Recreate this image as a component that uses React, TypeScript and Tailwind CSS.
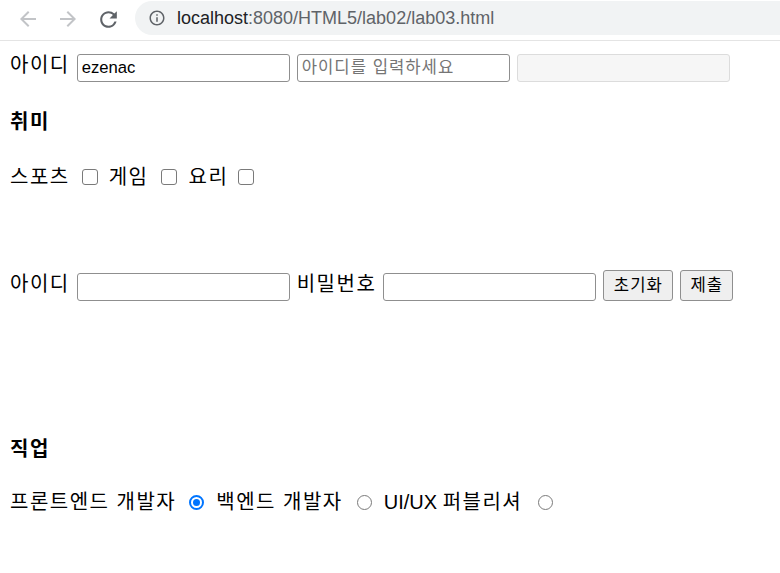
import React from "react";

function BackIcon() {
  return (
    <svg width="24" height="24" viewBox="0 0 24 24" className="shrink-0">
      <path fill="#c2c4c7" d="M20 11H7.83l5.59-5.59L12 4l-8 8 8 8 1.41-1.41L7.83 13H20v-2z" />
    </svg>
  );
}
function ForwardIcon() {
  return (
    <svg width="24" height="24" viewBox="0 0 24 24" className="shrink-0">
      <path fill="#c2c4c7" d="M12 4l-1.41 1.41L16.17 11H4v2h12.17l-5.58 5.59L12 20l8-8z" />
    </svg>
  );
}
function ReloadIcon() {
  return (
    <svg width="25" height="25" viewBox="0 0 24 24" className="shrink-0">
      <path
        fill="#5f6368"
        d="M17.65 6.35A7.958 7.958 0 0 0 12 4c-4.42 0-7.99 3.58-7.99 8s3.57 8 7.99 8c3.73 0 6.84-2.55 7.73-6h-2.08A5.99 5.99 0 0 1 12 18c-3.31 0-6-2.69-6-6s2.69-6 6-6c1.66 0 3.14.69 4.22 1.78L13 11h7V4l-2.35 2.35z"
      />
    </svg>
  );
}
function InfoIcon() {
  return (
    <svg width="18" height="18" viewBox="0 0 24 24" className="shrink-0">
      <path
        fill="#5f6368"
        d="M11 7h2v2h-2zm0 4h2v6h-2zm1-9C6.48 2 2 6.48 2 12s4.48 10 10 10 10-4.48 10-10S17.52 2 12 2zm0 18c-4.41 0-8-3.59-8-8s3.59-8 8-8 8 3.59 8 8-3.59 8-8 8z"
      />
    </svg>
  );
}

function Checkbox({ className = "" }: { className?: string }) {
  return (
    <span
      className={
        "inline-block w-[16px] h-[16px] shrink-0 border border-[#7a7a7a] rounded-[3px] bg-white " +
        className
      }
    />
  );
}

function Radio({ checked = false, className = "" }: { checked?: boolean; className?: string }) {
  if (checked) {
    return (
      <span
        className={
          "flex items-center justify-center w-[15px] h-[15px] shrink-0 rounded-full border-2 border-[#0075ff] bg-white " +
          className
        }
      >
        <span className="block w-[7px] h-[7px] rounded-full bg-[#0075ff]" />
      </span>
    );
  }
  return (
    <span
      className={
        "inline-block w-[15px] h-[15px] shrink-0 rounded-full border border-[#7a7a7a] bg-white " + className
      }
    />
  );
}

const inputCls =
  "w-[213px] h-[28px] shrink-0 border border-[#8f8f8f] rounded-[3px] px-[4px] text-[16.67px] text-black bg-white outline-none placeholder:text-[#757575]";
const btnCls =
  "h-[31px] shrink-0 border border-[#8f8f8f] rounded-[3px] bg-[#efefef] text-[16.67px] tracking-[1px] text-black flex items-center justify-center";

export default function App() {
  return (
    <div className="w-[780px] h-[573px] bg-white overflow-hidden text-black font-['Liberation_Sans','Noto_Sans_CJK_KR',sans-serif]">
      {/* browser toolbar */}
      <div className="h-[41px] border-b border-[#e4e4e4] flex items-start overflow-hidden">
        <div className="flex items-center h-[38px] pl-[16px]">
          <BackIcon />
          <span className="ml-[16px]">
            <ForwardIcon />
          </span>
          <span className="ml-[16px]">
            <ReloadIcon />
          </span>
        </div>
        <div className="ml-[14px] mt-[1px] h-[34px] w-[700px] shrink-0 rounded-full bg-[#f1f3f4] flex items-center pl-[13px]">
          <InfoIcon />
          <span className="ml-[11px] text-[18px] leading-[24px] whitespace-nowrap">
            <span className="text-[#202124]">localhost</span>
            <span className="text-[#5f6368]">:8080/HTML5/lab02/lab03.html</span>
          </span>
        </div>
      </div>

      <div className="pl-[10px] text-[20px]">
        {/* row 1 */}
        <div className="mt-[13px] flex items-start h-[28px]">
          <span className="leading-[24px] mt-[-1px] whitespace-nowrap tracking-[1.5px]">아이디</span>
          <input className={inputCls + " ml-[7px]"} defaultValue="ezenac" />
          <input className={inputCls + " ml-[7px] tracking-[1px]"} placeholder="아이디를 입력하세요" />
          <input
            className="ml-[7px] w-[213px] h-[28px] shrink-0 border border-[#dcdcdc] rounded-[3px] bg-[#f6f6f6] outline-none"
            disabled
          />
        </div>

        {/* 취미 */}
        <div className="mt-[28px] font-bold leading-[24px] tracking-[1.5px]">취미</div>

        <div className="mt-[31px] h-[24px] flex items-center tracking-[1.5px]">
          <span className="leading-[24px] whitespace-nowrap">스포츠</span>
          <Checkbox className="ml-[12px]" />
          <span className="leading-[24px] ml-[11px] whitespace-nowrap">게임</span>
          <Checkbox className="ml-[12px]" />
          <span className="leading-[24px] ml-[12px] whitespace-nowrap">요리</span>
          <Checkbox className="ml-[10px]" />
        </div>

        {/* row 2 */}
        <div className="mt-[81px] flex items-start h-[31px]">
          <span className="leading-[24px] mt-[2px] whitespace-nowrap tracking-[1.5px]">아이디</span>
          <input className={inputCls + " ml-[7px] mt-[3px]"} />
          <span className="leading-[24px] mt-[2px] ml-[7px] whitespace-nowrap tracking-[1.5px]">비밀번호</span>
          <input type="password" className={inputCls + " ml-[7px] mt-[3px]"} />
          <button className={btnCls + " ml-[7px] w-[70px]"}>초기화</button>
          <button className={btnCls + " ml-[7px] w-[53px]"}>제출</button>
        </div>

        {/* 직업 */}
        <div className="mt-[136px] font-bold leading-[24px] tracking-[1.5px]">직업</div>

        <div className="mt-[29px] h-[24px] flex items-center">
          <span className="leading-[24px] whitespace-nowrap tracking-[1.5px]">프론트엔드 개발자</span>
          <Radio checked className="ml-[13px]" />
          <span className="leading-[24px] ml-[12px] whitespace-nowrap tracking-[1.5px]">백엔드 개발자</span>
          <Radio className="ml-[14px]" />
          <span className="leading-[24px] ml-[12px] whitespace-nowrap">
            UI/UX <span className="tracking-[1.5px]">퍼블리셔</span>
          </span>
          <Radio className="ml-[16px]" />
        </div>
      </div>
    </div>
  );
}
